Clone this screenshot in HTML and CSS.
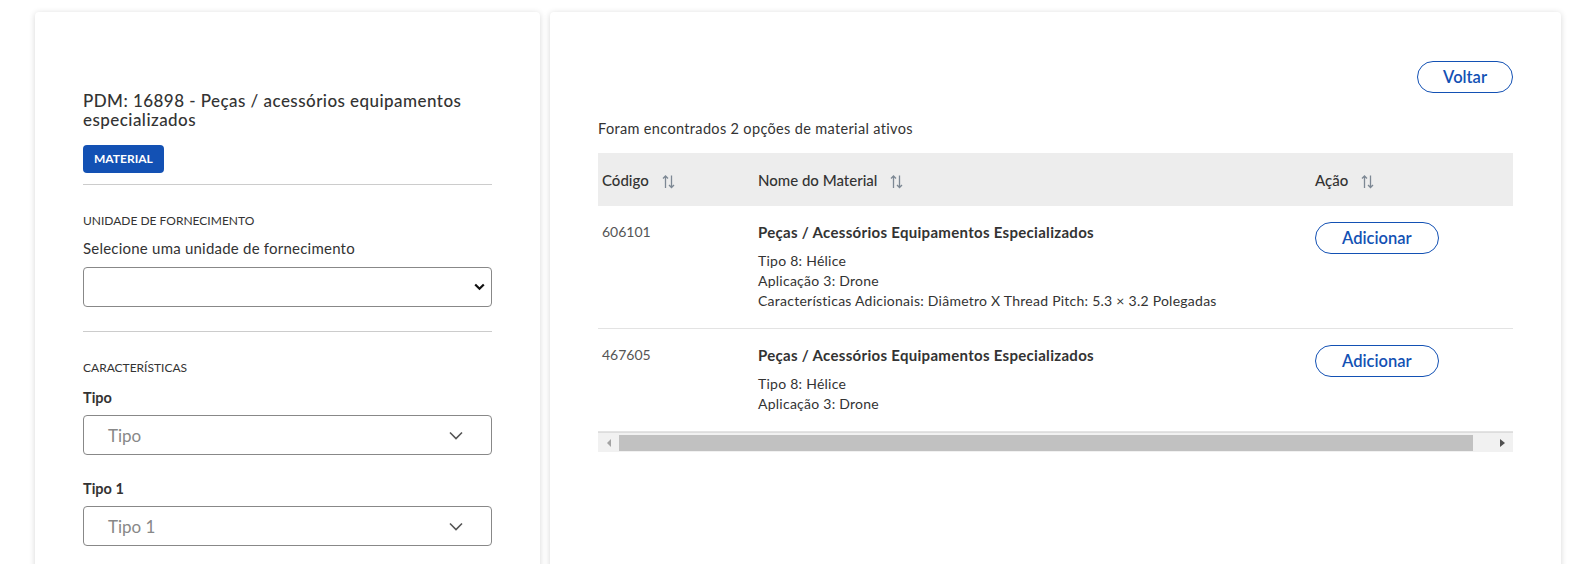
FILE: index.html
```html
<!DOCTYPE html>
<html lang="pt-BR">

<head>
    <meta charset="UTF-8">
    <meta name="viewport" content="width=device-width, initial-scale=1.0">
    <title>Catálogo - Material</title>
    <link rel="stylesheet" href="styles.css">
</head>

<body>
    <div class="page">
        <aside class="card side">
            <h2 class="pdm-title">PDM: 16898 - Peças / acessórios equipamentos especializados</h2>
            <span class="tag">MATERIAL</span>
            <hr class="sep">

            <section class="block">
                <h3 class="block-title">UNIDADE DE FORNECIMENTO</h3>
                <label class="field-label" for="unidade">Selecione uma unidade de fornecimento</label>
                <div class="select-wrap">
                    <select id="unidade" class="native-select">
                        <option></option>
                    </select>
                    <svg class="select-arrow" width="11" height="8" viewBox="0 0 11 8"><polyline points="1.2,1.5 5.5,5.8 9.8,1.5" /></svg>
                </div>
            </section>
            <hr class="sep">

            <section class="block">
                <h3 class="block-title">CARACTERÍSTICAS</h3>
                <div class="field">
                    <label class="label-strong">Tipo</label>
                    <div class="br-select">
                        <span class="placeholder">Tipo</span>
                        <svg class="chev" width="14" height="9" viewBox="0 0 14 9"><polyline points="1,1.5 7,7.5 13,1.5" /></svg>
                    </div>
                </div>
                <div class="field">
                    <label class="label-strong">Tipo 1</label>
                    <div class="br-select">
                        <span class="placeholder">Tipo 1</span>
                        <svg class="chev" width="14" height="9" viewBox="0 0 14 9"><polyline points="1,1.5 7,7.5 13,1.5" /></svg>
                    </div>
                </div>
            </section>
        </aside>

        <main class="card results">
            <div class="top-row">
                <button class="btn-outline">Voltar</button>
            </div>
            <p class="found">Foram encontrados 2 opções de material ativos</p>

            <div class="table-wrap">
                <table class="mat-table">
                    <colgroup>
                        <col class="c-cod">
                        <col class="c-nome">
                        <col class="c-acao">
                    </colgroup>
                    <thead>
                        <tr>
                            <th>Código <svg class="sort" width="13" height="15" viewBox="0 0 13 15"><path d="M3.5 14V2M1 4.5L3.5 2L6 4.5M9.5 1.5V13.5M7 11L9.5 13.5L12 11" /></svg></th>
                            <th>Nome do Material <svg class="sort" width="13" height="15" viewBox="0 0 13 15"><path d="M3.5 14V2M1 4.5L3.5 2L6 4.5M9.5 1.5V13.5M7 11L9.5 13.5L12 11" /></svg></th>
                            <th>Ação <svg class="sort" width="13" height="15" viewBox="0 0 13 15"><path d="M3.5 14V2M1 4.5L3.5 2L6 4.5M9.5 1.5V13.5M7 11L9.5 13.5L12 11" /></svg></th>
                        </tr>
                    </thead>
                    <tbody>
                        <tr>
                            <td class="cod">606101</td>
                            <td>
                                <div class="mat-name">Peças / Acessórios Equipamentos Especializados</div>
                                <div class="mat-line">Tipo 8: Hélice</div>
                                <div class="mat-line">Aplicação 3: Drone</div>
                                <div class="mat-line">Características Adicionais: Diâmetro X Thread Pitch: 5.3 × 3.2 Polegadas</div>
                            </td>
                            <td><button class="btn-outline btn-add">Adicionar</button></td>
                        </tr>
                        <tr>
                            <td class="cod">467605</td>
                            <td>
                                <div class="mat-name">Peças / Acessórios Equipamentos Especializados</div>
                                <div class="mat-line">Tipo 8: Hélice</div>
                                <div class="mat-line">Aplicação 3: Drone</div>
                            </td>
                            <td><button class="btn-outline btn-add">Adicionar</button></td>
                        </tr>
                    </tbody>
                </table>

                <div class="hscroll">
                    <span class="arrow arrow-left"></span>
                    <span class="thumb"></span>
                    <span class="arrow arrow-right"></span>
                </div>
            </div>
        </main>
    </div>
</body>

</html>
```

FILE: styles.css
```css
html, body {
    margin: 0;
    height: 100%;
    overflow: hidden;
}
body {
    background-color: #fff;
    font-family: Lato, "Open Sans", sans-serif;
    color: #333;
}
.page {
    display: flex;
    gap: 10px;
    padding: 12px 34px 0 35px;
}
.card {
    background-color: #fff;
    border-radius: 4px;
    box-shadow: 0 1px 6px rgba(0, 0, 0, 0.16);
    height: 600px;
    box-sizing: border-box;
}
.side {
    width: 505px;
    flex: none;
    padding: 79px 48px 0 48px;
}
.results {
    flex: 1;
    padding: 49px 48px 0 48px;
}

/* coluna lateral */
.pdm-title {
    margin: 0;
    font-size: 17px;
    line-height: 19px;
    font-weight: 500;
    letter-spacing: 0.45px;
}
.tag {
    display: inline-block;
    margin-top: 16px;
    height: 28px;
    line-height: 28px;
    padding: 0 11px;
    background-color: #1351b4;
    color: #fff;
    font-size: 12px;
    font-weight: 700;
    border-radius: 4px;
}
.sep {
    border: 0;
    border-top: 1px solid #ccc;
    margin: 11px 0 0 0;
}
.block {
    padding-top: 28px;
    padding-bottom: 13px;
}
.block-title {
    margin: 0;
    font-size: 12px;
    line-height: 16px;
    font-weight: 400;
}
.field-label {
    display: block;
    margin-top: 9px;
    font-size: 15px;
    line-height: 20px;
    letter-spacing: 0.22px;
}
.select-wrap {
    position: relative;
    margin-top: 9px;
}
.native-select {
    display: block;
    width: 100%;
    height: 40px;
    appearance: none;
    border: 1px solid #888;
    border-radius: 4px;
    background-color: #fff;
    font-family: inherit;
    font-size: 15px;
}
.select-arrow {
    position: absolute;
    right: 7px;
    top: 16px;
    pointer-events: none;
}
.select-arrow polyline {
    fill: none;
    stroke: #111;
    stroke-width: 2.2;
}
.field {
    margin-top: 12px;
}
.field + .field {
    margin-top: 24px;
}
.label-strong {
    display: block;
    font-size: 14.5px;
    line-height: 20px;
    font-weight: 700;
}
.br-select {
    margin-top: 7px;
    height: 40px;
    box-sizing: border-box;
    border: 1px solid #888;
    border-radius: 4px;
    display: flex;
    align-items: center;
    justify-content: space-between;
    padding: 0 28px 0 24px;
}
.placeholder {
    color: #888;
    font-size: 17px;
}
.chev polyline {
    fill: none;
    stroke: #555;
    stroke-width: 1.6;
}

/* resultados */
.top-row {
    display: flex;
    justify-content: flex-end;
}
.btn-outline {
    height: 32px;
    padding: 0 25px;
    border: 1px solid #1351b4;
    border-radius: 100px;
    background-color: #fff;
    color: #1351b4;
    font-family: inherit;
    font-size: 16.5px;
    font-weight: 600;
}
.found {
    margin: 26px 0 0 0;
    font-size: 14.5px;
    line-height: 20px;
    letter-spacing: 0.34px;
}
.table-wrap {
    margin-top: 14px;
}
.mat-table {
    width: 100%;
    border-collapse: collapse;
    table-layout: fixed;
}
.c-cod { width: 156px; }
.c-acao { width: 202px; }
.mat-table th {
    background-color: #ededed;
    height: 53px;
    padding: 0 4px;
    text-align: left;
    font-size: 15px;
    font-weight: 500;
    white-space: nowrap;
}
.sort {
    margin-left: 9px;
    vertical-align: -3px;
}
.sort path {
    fill: none;
    stroke: #7d8894;
    stroke-width: 1.3;
}
.mat-table td {
    vertical-align: top;
    padding: 16px 4px 17px 4px;
    font-size: 14px;
    line-height: 20px;
    letter-spacing: 0.25px;
    border-bottom: 1px solid #e3e3e3;
}
.mat-table td.cod {
    color: #555;
    letter-spacing: 0;
}
.mat-name {
    font-size: 15px;
    font-weight: 700;
    letter-spacing: 0.3px;
    margin-bottom: 9px;
}
.btn-add {
    padding: 0 26px;
    letter-spacing: 0;
}

/* barra de rolagem */
.hscroll {
    display: flex;
    align-items: center;
    height: 19px;
    background-color: #f1f1f1;
    border-top: 1px solid #ddd;
}
.arrow {
    width: 0;
    height: 0;
    border-top: 4px solid transparent;
    border-bottom: 4px solid transparent;
}
.arrow-left {
    border-right: 4px solid #a3a3a3;
    margin: 0 8px 0 9px;
}
.arrow-right {
    border-left: 5px solid #505050;
    margin: 0 8px 0 27px;
}
.thumb {
    flex: 1;
    height: 16px;
    background-color: #c1c1c1;
}
```
